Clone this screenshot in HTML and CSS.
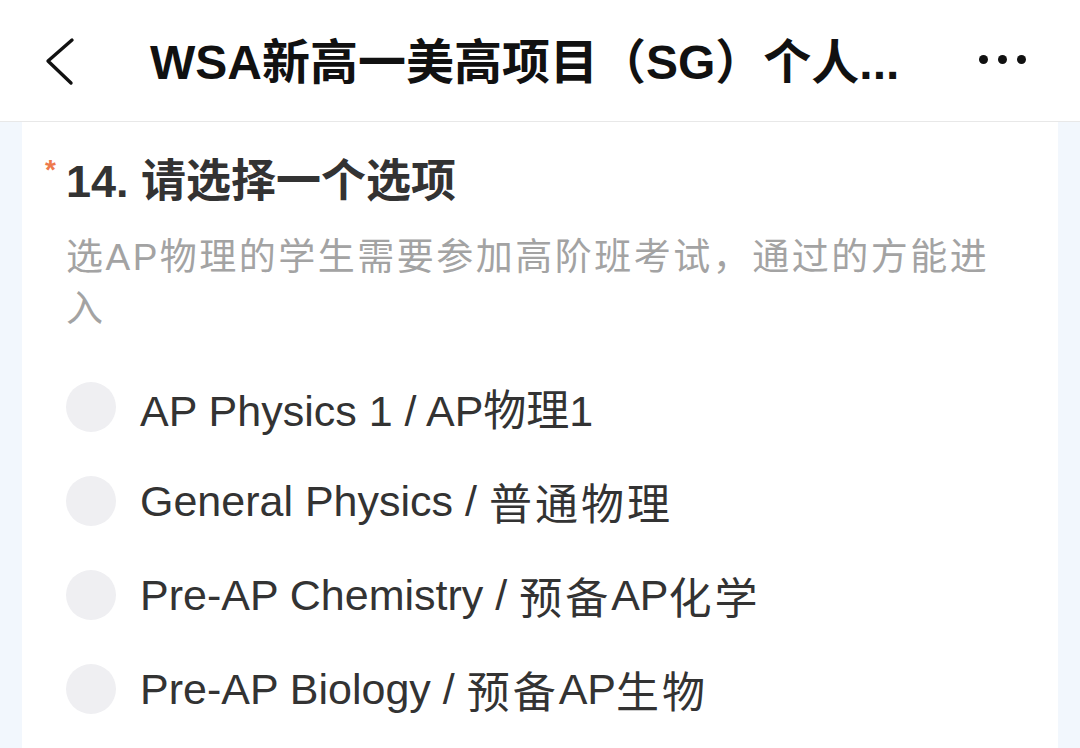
FILE: index.html
```html
<!DOCTYPE html>
<html lang="zh-CN">
<head>
  <meta charset="UTF-8">
  <meta name="viewport" content="width=device-width, initial-scale=1.0">
  <title>WSA新高一美高项目（SG）个人信息</title>
  <link rel="stylesheet" href="styles.css">
</head>
<body>
  <div class="topbar">
    <div class="back">
      <svg width="40" height="50" viewBox="0 0 40 50">
        <polyline points="28,4 4,25 27,47" fill="none" stroke="#111" stroke-width="3.4" stroke-linecap="round" stroke-linejoin="round"/>
      </svg>
    </div>
    <div class="bar-title">WSA新高一美高项目（SG）个人...</div>
    <div class="more">
      <span></span><span></span><span></span>
    </div>
  </div>

  <div class="page">
    <div class="card">
      <div class="question">
        <span class="required">*</span>14. 请选择一个选项
      </div>
      <div class="desc">选AP物理的学生需要参加高阶班考试，通过的方能进入</div>

      <div class="options">
        <label class="option"><span class="radio"></span>AP Physics 1 / AP物理1</label>
        <label class="option"><span class="radio"></span>General Physics / <span class="cn">普通物理</span></label>
        <label class="option"><span class="radio"></span>Pre-AP Chemistry / <span class="cn">预备</span>AP<span class="cn">化学</span></label>
        <label class="option"><span class="radio"></span>Pre-AP Biology / <span class="cn">预备</span>AP<span class="cn">生物</span></label>
      </div>
    </div>
  </div>
</body>
</html>
```

FILE: styles.css
```css
body {
  margin: 0;
  font-family: "Liberation Sans", "Noto Sans CJK SC", sans-serif;
  background: #f2f7fd;
  color: #333;
}
.topbar {
  height: 122px;
  background: white;
  border-bottom: 1px solid #e8e8e8;
  display: flex;
  align-items: center;
  box-sizing: border-box;
}
.back {
  width: 150px;
  padding-left: 44px;
  box-sizing: border-box;
  display: flex;
  align-items: center;
}
.bar-title {
  flex: 1;
  font-size: 48px;
  font-weight: bold;
  color: #111;
  white-space: nowrap;
  margin-top: -6px;
}
.more {
  width: 101px;
  display: flex;
  gap: 10px;
  margin-top: -2px;
}
.more span {
  width: 9px;
  height: 9px;
  border-radius: 50%;
  background: #111;
}
.page {
  padding: 0 22px;
}
.card {
  background: white;
  min-height: 626px;
  padding: 30px 44px 0 44px;
}
.question {
  font-size: 45px;
  font-weight: 600;
  line-height: 60px;
  color: #333;
  margin-left: -21px;
}
.required {
  display: inline-block;
  width: 21px;
  font-size: 28px;
  color: #ee7a4c;
  vertical-align: top;
  line-height: 36px;
}
.desc {
  margin-top: 20px;
  font-size: 37px;
  line-height: 52px;
  color: #a3a3a3;
  letter-spacing: 2.5px;
}
.options {
  margin-top: 24px;
}
.option {
  display: flex;
  align-items: center;
  height: 94px;
  font-size: 43px;
  color: #333;
  white-space: pre;
}
.cn {
  letter-spacing: 3px;
}
.radio {
  width: 50px;
  height: 50px;
  border-radius: 50%;
  background: #efeff2;
  margin-right: 24px;
}
```
